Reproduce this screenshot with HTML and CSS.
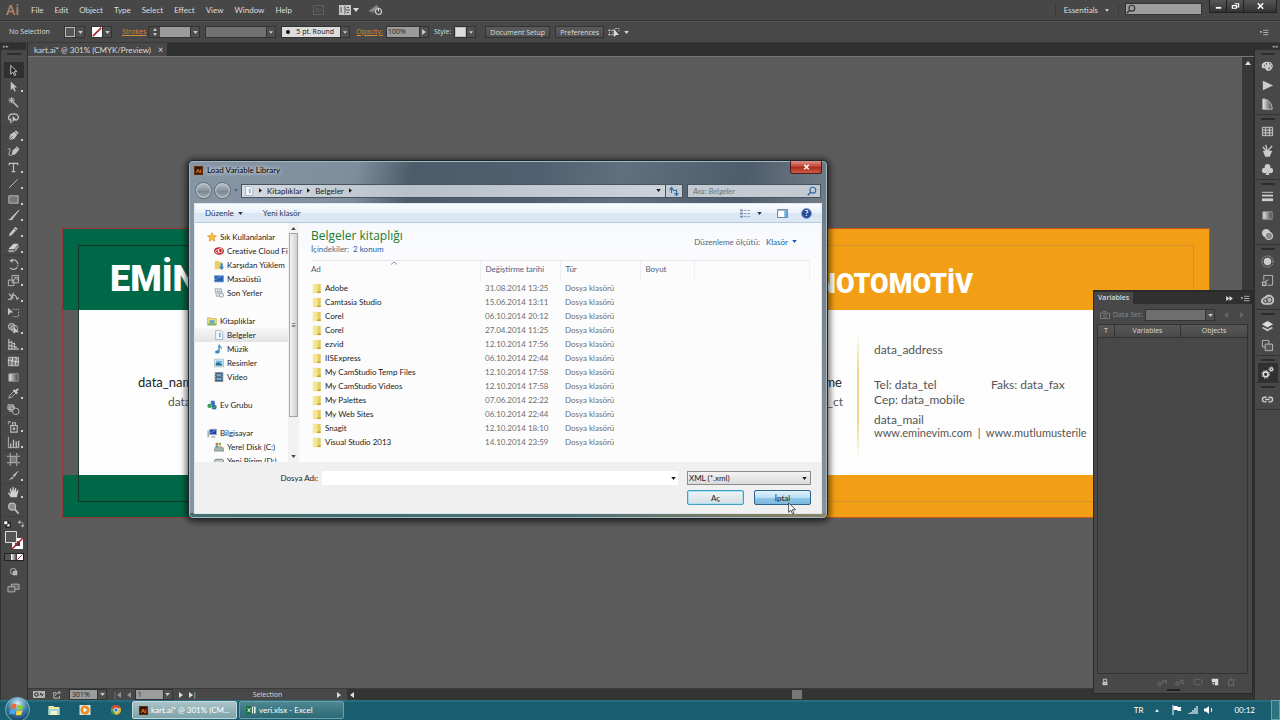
FILE: index.html
```html
<!DOCTYPE html>
<html lang="tr">
<head>
<meta charset="utf-8">
<title>kart.ai* @ 301% (CMYK/Preview)</title>
<link rel="stylesheet" href="styles.css">
</head>
<body>
<svg class="sprite" aria-hidden="true">
  <defs>
    <linearGradient id="gFold" x1="0" x2="1"><stop offset="0" stop-color="#f7eb9a"/><stop offset="1" stop-color="#dcbf4c"/></linearGradient>
    <linearGradient id="gBW" x1="0" x2="1"><stop offset="0" stop-color="#e8e8e8"/><stop offset="1" stop-color="#444"/></linearGradient>
    <radialGradient id="gOrb" cx=".5" cy=".25" r=".8"><stop offset="0" stop-color="#d6ecf5"/><stop offset=".5" stop-color="#3c83a8"/><stop offset="1" stop-color="#0c3550"/></radialGradient>
  </defs>
  <symbol id="t-select" viewBox="0 0 14 14"><path d="M4 1.5v9.5l2.300-2.200 1.700 3.700 1.500-.7-1.700-3.600h3z" fill="#222" stroke="#ccc"/></symbol>
  <symbol id="t-direct" viewBox="0 0 14 14"><path d="M4 1.500v9.500l2.300-2.200 1.700 3.700 1.500-.7-1.700-3.600h3z" fill="#c4c4c4"/></symbol>
  <symbol id="t-wand" viewBox="0 0 14 14"><path d="M5 1v7M1.500 4.500h7M2.500 2l5 5M7.500 2l-5 5" stroke="#c4c4c4" fill="none"/><path d="M6 6l6 6" stroke="#c4c4c4" stroke-width="1.500"/></symbol>
  <symbol id="t-lasso" viewBox="0 0 14 14"><path d="M4 9C0 8 1 2 7 2s7 6 2 7M4 7c-1 2 1 3 0 5" fill="none" stroke="#c4c4c4" stroke-width="1.400"/><path d="M6 4v7l2-2 3 0z" fill="#c4c4c4"/></symbol>
  <symbol id="t-pen" viewBox="0 0 14 14"><path d="M2 12l1.500-6L8 3l3 3-3 4.500z" fill="#c4c4c4"/><path d="M9 2l3 3" stroke="#c4c4c4" stroke-width="1.600"/><path d="M2 12l4-4" stroke="#474747"/></symbol>
  <symbol id="t-curve" viewBox="0 0 14 14"><path d="M5 11l1-5 3.500-3 3 3L9 10z" fill="#c4c4c4"/><path d="M1 5c2-3 3 0 2 2s-2 5 2 4" fill="none" stroke="#c4c4c4"/><path d="M10 2l3 3" stroke="#c4c4c4" stroke-width="1.500"/></symbol>
  <symbol id="t-type" viewBox="0 0 14 14"><path d="M2.500 4.500V2.500h9v2M7 2.500v9M5 11.500h4" fill="none" stroke="#c4c4c4" stroke-width="1.300"/></symbol>
  <symbol id="t-line" viewBox="0 0 14 14"><path d="M2.500 11.500l9-9" stroke="#c4c4c4"/></symbol>
  <symbol id="t-rect" viewBox="0 0 14 14"><path d="M2 3h10v8H2z" fill="#777" stroke="#bbb"/></symbol>
  <symbol id="t-brush" viewBox="0 0 14 14"><path d="M13 1L7 9 6 8z" fill="#c4c4c4" stroke="#c4c4c4"/><path d="M6 8c-2 0-1 3-5 3 3 2 6 1 6-2z" fill="#c4c4c4"/></symbol>
  <symbol id="t-pencil" viewBox="0 0 14 14"><path d="M2 12l1-3 6-7 2.500 2L5 11z" fill="#c4c4c4"/><path d="M8 4l2 2" stroke="#474747"/></symbol>
  <symbol id="t-eraser" viewBox="0 0 14 14"><path d="M1.500 8.500L7 3h5.500L8 8.500z" fill="#d0d0d0"/><path d="M1.500 9.500h6v2.500h-6zM8.300 9l4.200-5v3L8.300 12z" fill="#a0a0a0"/></symbol>
  <symbol id="t-rotate" viewBox="0 0 14 14"><path d="M5 2.500a5 5 0 1 1-2 8" fill="none" stroke="#bbb" stroke-width="1.300" stroke-dasharray="9 1 1 1"/><path d="M6 .5L2.500 3 6 5z" fill="#bbb"/></symbol>
  <symbol id="t-scale" viewBox="0 0 14 14"><path d="M1.500 6.500h6v6h-6zM5.500 1.500h7v8h-7z" fill="none" stroke="#bbb"/><path d="M6 8l4-4M7.500 3.500H11V7" stroke="#bbb" fill="none"/></symbol>
  <symbol id="t-width" viewBox="0 0 14 14"><path d="M1 10c4 2 5-7 8-4s0 6 4 2M2 4l5 5M7 3l-3 8" fill="none" stroke="#bbb" stroke-width="1.300"/></symbol>
  <symbol id="t-free" viewBox="0 0 14 14"><path d="M1 2v8l3-3h3z" fill="#c4c4c4"/><path d="M6 3.500h6.500v8H5.500" fill="none" stroke="#c4c4c4" stroke-dasharray="1.500 1.500"/></symbol>
  <symbol id="t-shape" viewBox="0 0 14 14"><circle cx="5" cy="5" r="3.500" fill="#777" stroke="#bbb"/><circle cx="8" cy="7" r="3.500" fill="none" stroke="#bbb"/><path d="M7 5v8l2-2h4z" fill="#c4c4c4"/></symbol>
  <symbol id="t-persp" viewBox="0 0 14 14"><path d="M2 1v11M5 3v9M8 5v7M2 4l7 3M2 8l9 2M1 12h12" fill="none" stroke="#bbb" stroke-width="1.300"/></symbol>
  <symbol id="t-mesh" viewBox="0 0 14 14"><path d="M1.500 2.500h11v9h-11z" fill="#777" stroke="#bbb"/><path d="M1 6c4-2 7 3 12 1M5 2c3 3-2 6 1 10M9 2c3 3-2 6 1 10" fill="none" stroke="#ddd"/></symbol>
  <symbol id="t-grad" viewBox="0 0 14 14"><path d="M2 3h10v8H2z" fill="url(#gBW)" stroke="#999"/></symbol>
  <symbol id="t-eye" viewBox="0 0 14 14"><path d="M2 12l1-3 5-5 2 2-5 5z" fill="none" stroke="#bbb"/><path d="M7 3l4 4M9 5l3-3" stroke="#ccc" stroke-width="2"/></symbol>
  <symbol id="t-blend" viewBox="0 0 14 14"><path d="M1 2h6v5H1zM3 4h5v5H3z" fill="#777" stroke="#bbb"/><circle cx="9.500" cy="9" r="3.500" fill="#474747" stroke="#bbb"/></symbol>
  <symbol id="t-spray" viewBox="0 0 14 14"><path d="M4 6h7v7H4zM6 6V3h3v3M1 2h3M1 4h1" fill="none" stroke="#bbb" stroke-width="1.200"/><circle cx="7.500" cy="9.500" r="1.500" fill="#bbb"/></symbol>
  <symbol id="t-graph" viewBox="0 0 14 14"><path d="M1.500 1v11.500H13" fill="none" stroke="#bbb"/><path d="M4 8v4M7 4v8M10 6v6M12.500 5v7" stroke="#bbb" stroke-width="1.500"/></symbol>
  <symbol id="t-artb" viewBox="0 0 14 14"><path d="M3.500 3.500h7v7h-7z" fill="#777" stroke="#bbb"/><path d="M3.500 0v3M10.500 0v3M3.500 11v3M10.500 11v3M0 3.500h3M0 10.500h3M11 3.500h3M11 10.500h3" stroke="#bbb"/></symbol>
  <symbol id="t-slice" viewBox="0 0 14 14"><path d="M13 1L8 9 6 7z" fill="#bbb"/><path d="M6 8l-4 4 5-2z" fill="#ccc"/></symbol>
  <symbol id="t-hand" viewBox="0 0 14 14"><path d="M4 12L1 7.500 2 7l2 2-1-6 1-.5 1.500 4L6 1h1.200l.3 5 1.500-4 1 .3L9.500 7l2-3 .9.600L10.500 12z" fill="#d0d0d0"/></symbol>
  <symbol id="t-zoom" viewBox="0 0 14 14"><circle cx="5.500" cy="5" r="3.700" fill="#8a8a8a" stroke="#bbb" stroke-width="1.400"/><path d="M8.500 8l4 4.500" stroke="#bbb" stroke-width="2"/></symbol>
  <symbol id="m-swap" viewBox="0 0 10 10"><path d="M3 3c4-1 5 1 4 5" fill="none" stroke="#bbb"/><path d="M4 0L1 3l3 2zM4.500 6.500h5L7 9.500z" fill="#bbb"/></symbol>
  <symbol id="m-def" viewBox="0 0 10 10"><path d="M4 4h5v5H4z" fill="#fff" stroke="#111" stroke-width="1.500"/><path d="M1 1h5v5H1z" fill="#fff" stroke="#111"/></symbol>
  <symbol id="m-draw" viewBox="0 0 14 14"><circle cx="6" cy="6" r="4" fill="none" stroke="#999" stroke-width="1.500"/><path d="M6 6h5v5H6z" fill="#aaa" stroke="#ddd"/></symbol>
  <symbol id="m-screen" viewBox="0 0 14 14"><path d="M4.500 2.500h9v6h-9z" fill="#666" stroke="#bbb"/><path d="M.5 5.500h8v6h-8z" fill="#555" stroke="#bbb"/></symbol>
  <symbol id="d-palette" viewBox="0 0 14 14"><path d="M7 2C2 2 0 5 1 8c1 2 3 0 4 2s3 2 5 1c4-2 4-9-3-9z" fill="#ccc"/><path d="M3.500 6h1M5.500 4h1M9 4h1M10.500 6.500h1M8 9h1.500" stroke="#444" stroke-width="1.600"/></symbol>
  <symbol id="d-play" viewBox="0 0 14 14"><path d="M2 2l11 5-11 5z" fill="#ccc"/></symbol>
  <symbol id="d-guide" viewBox="0 0 14 14"><path d="M2 1c6 0 10 5 10 11H2z" fill="url(#gBW)" stroke="#ccc"/></symbol>
  <symbol id="d-swatch" viewBox="0 0 14 14"><path d="M1.500 2.500h11v9h-11zM1.500 5.500h11M1.500 8.500h11M5 2.500v9M9 2.500v9" fill="#555" stroke="#ccc"/></symbol>
  <symbol id="d-brush" viewBox="0 0 14 14"><path d="M3 8h8l-2 5H5zM7 8L5 1M7 8l5-6M6 8L2 3" fill="#ccc" stroke="#ccc" stroke-width="1.400"/></symbol>
  <symbol id="d-club" viewBox="0 0 14 14"><circle cx="7" cy="4" r="3" fill="#ccc"/><circle cx="4" cy="8" r="3" fill="#ccc"/><circle cx="10" cy="8" r="3" fill="#ccc"/><path d="M7 7l2 6H5z" fill="#ccc"/></symbol>
  <symbol id="d-stroke" viewBox="0 0 14 14"><path d="M1 2.500h12" stroke="#ccc"/><path d="M1 6h12" stroke="#ccc" stroke-width="2"/><path d="M1 10.500h12" stroke="#ccc" stroke-width="3"/></symbol>
  <symbol id="d-transp" viewBox="0 0 14 14"><circle cx="5.500" cy="5.500" r="4.500" fill="#ccc"/><circle cx="8.500" cy="8.500" r="4" fill="#888" stroke="#ddd"/></symbol>
  <symbol id="d-appear" viewBox="0 0 14 14"><circle cx="7" cy="7" r="4" fill="#ccc"/><circle cx="7" cy="7" r="6" fill="none" stroke="#bbb" stroke-dasharray="1.500 1.200"/></symbol>
  <symbol id="d-gstyle" viewBox="0 0 14 14"><path d="M3 7V1.500h9.500V12H7" fill="none" stroke="#bbb"/><path d="M1.500 8.500h4v4h-4z" fill="#666" stroke="#ccc"/><path d="M5 8l3-2" stroke="#ccc"/></symbol>
  <symbol id="d-cc" viewBox="0 0 14 14"><path d="M4 12C-1 12 0 5 4 5c1-4 10-4 9.500 3 0 3-2 4-4 4z" fill="#b4b4b4" stroke="#ddd"/><circle cx="4.800" cy="8.500" r="2" fill="none" stroke="#444"/><circle cx="9" cy="7.500" r="2.800" fill="none" stroke="#444"/></symbol>
  <symbol id="d-layers" viewBox="0 0 14 14"><path d="M7 1l6 3.500L7 8 1 4.500z" fill="#ddd"/><path d="M2.500 7.500L1 8.500 7 12l6-3.500-1.500-1L7 10z" fill="#ccc"/></symbol>
  <symbol id="d-artb" viewBox="0 0 14 14"><path d="M1.500 1.500h7v7h-7z" fill="none" stroke="#bbb"/><path d="M4.500 5.500h8v7h-8z" fill="#555" stroke="#bbb"/></symbol>
  <symbol id="d-gears" viewBox="0 0 14 14"><circle cx="5" cy="9" r="2.600" fill="none" stroke="#ddd" stroke-width="1.800"/><circle cx="5" cy="9" r="4.200" fill="none" stroke="#ddd" stroke-dasharray="1.500 1.800"/><circle cx="11" cy="3.500" r="1.400" fill="none" stroke="#ddd" stroke-width="1.300"/><circle cx="11" cy="3.500" r="2.500" fill="none" stroke="#ddd" stroke-dasharray="1 1"/></symbol>
  <symbol id="d-link" viewBox="0 0 14 14"><path d="M6 9.500H4a2.500 2.500 0 0 1 0-5h2M8 4.500h2a2.500 2.500 0 0 1 0 5H8M4.500 7h5" fill="none" stroke="#ccc" stroke-width="1.500"/></symbol>
  <symbol id="down" viewBox="0 0 6 4"><path d="M0 0h6L3 4z" fill="currentColor"/></symbol>
  <symbol id="right" viewBox="0 0 4 6"><path d="M0 0v6l4-3z" fill="currentColor"/></symbol>
  <symbol id="left" viewBox="0 0 4 6"><path d="M4 0v6L0 3z" fill="currentColor"/></symbol>
  <symbol id="up" viewBox="0 0 6 4"><path d="M0 4h6L3 0z" fill="currentColor"/></symbol>
  <symbol id="menu" viewBox="0 0 10 8"><path d="M0 2.500h3L1.500 5z" fill="#bbb"/><path d="M4 1.500h6M4 4h6M4 6.500h6" stroke="#bbb"/></symbol>
  <symbol id="slash" viewBox="0 0 12 12"><path d="M0 0h12v12H0z" fill="#fff"/><path d="M1 11L11 1" stroke="#b3202c" stroke-width="2"/></symbol>
  <symbol id="star" viewBox="0 0 12 12"><path d="M6 .8l1.600 3.500 3.800.4-2.900 2.500.9 3.800L6 9.100 2.600 11l.9-3.800L.6 4.700l3.800-.4z" fill="#f7bd3c" stroke="#d08a1c" stroke-width=".7"/></symbol>
  <symbol id="ccred" viewBox="0 0 12 12"><ellipse cx="6" cy="6" rx="6" ry="4.500" fill="#c8202c"/><circle cx="4" cy="6.500" r="2" fill="none" stroke="#fff"/><circle cx="7.500" cy="5.500" r="2.500" fill="none" stroke="#fff"/></symbol>
  <symbol id="dl" viewBox="0 0 12 12"><path d="M1 1h4l1 1h3v9H1z" fill="#ecd067"/><path d="M8 4v4H6l3.500 4L12 8h-1.500V4z" fill="#2f83c8"/></symbol>
  <symbol id="desk" viewBox="0 0 12 12"><path d="M.5 2h11v7.500H.5z" fill="#2a62b2" stroke="#7ba0cc"/><path d="M1 7c3-1 4-4 8-4" stroke="#66a9e8" fill="none"/></symbol>
  <symbol id="recent" viewBox="0 0 12 12"><path d="M1 1h8l1 9H3z" fill="#dfe5e8" stroke="#97a5ad"/><path d="M3 4h5M3 6h5" stroke="#8aa"/><circle cx="9" cy="8.500" r="2.500" fill="#e9eef0" stroke="#8a9aa3"/></symbol>
  <symbol id="lib" viewBox="0 0 12 12"><path d="M.5 2h4l1 1h6v8H.5z" fill="#efd978" stroke="#b9a24b" stroke-width=".6"/><path d="M3 5h6v4H3z" fill="#5faac8"/><path d="M1 9h10v2H1z" fill="#77b36a"/></symbol>
  <symbol id="doc" viewBox="0 0 12 12"><path d="M2 .5h6l2.500 2.500v8.500H2z" fill="#f8fbfd" stroke="#9aa9b5"/><path d="M6 4h2M5.500 6h3M6 8h2" stroke="#3a76b4"/></symbol>
  <symbol id="music" viewBox="0 0 12 12"><path d="M6 1v8" stroke="#2878bd" stroke-width="1.500"/><path d="M6 0c1 3 5 3 3 7 0-2-2-3-3-3z" fill="#3fa0dd"/><ellipse cx="4" cy="9.500" rx="2.800" ry="2" fill="#2f8bcb"/></symbol>
  <symbol id="pic" viewBox="0 0 12 12"><path d="M.5 1.500h11v9H.5z" fill="#fff" stroke="#9fb2bf"/><path d="M2 3h8v6H2z" fill="#6cbbe4"/><path d="M2 7l3-2 5 3v1H2z" fill="#256a86"/></symbol>
  <symbol id="video" viewBox="0 0 12 12"><path d="M1 .5h10v11H1z" fill="#33465a"/><path d="M3 2h6v3.500H3zM3 6.500h6V10H3z" fill="#74a6cb"/><path d="M2 1v10M10 1v10" stroke="#dfe8ee" stroke-dasharray="1 1"/></symbol>
  <symbol id="home" viewBox="0 0 12 12"><circle cx="7" cy="3.500" r="2.800" fill="#3777c4"/><circle cx="3" cy="7" r="2.600" fill="#3aa04b"/><circle cx="8.500" cy="8.500" r="3" fill="#2b61ad"/><path d="M6 8l2 2 3-4" stroke="#77d169" fill="none"/></symbol>
  <symbol id="pc" viewBox="0 0 12 12"><path d="M3 1.500h8.500v6.500H3z" fill="#2142a8" stroke="#a9b4be"/><path d="M5 10h5v1.500H5zM.5 3h2v8h-2z" fill="#a1acb5"/><path d="M4 6l6-3" stroke="#769be4"/></symbol>
  <symbol id="drive" viewBox="0 0 12 12"><path d="M0 8l2-2h8l2 2v3H0z" fill="#a9b2b8" stroke="#707b83" stroke-width=".6"/><path d="M2 1h3v2.500H2z" fill="#e36a3a"/><path d="M5.500 1h3v2.500h-3z" fill="#7cb94b"/><path d="M2 4h3v2H2z" fill="#3d8dd0"/><path d="M5.500 4h3v2h-3z" fill="#efc43d"/><path d="M9 9.500h2" stroke="#56d04c"/></symbol>
  <symbol id="drive2" viewBox="0 0 12 12"><path d="M0 6l2-2h8l2 2v3H0z" fill="#c9ced2" stroke="#626b72"/><path d="M9 7.500h2" stroke="#56d04c"/></symbol>
  <symbol id="folder" viewBox="0 0 12 12"><path d="M2 1l4-.5V11l-4 .5z" fill="#f6e88f"/><path d="M5 1h5.500v10H5z" fill="url(#gFold)"/><path d="M8 9h2.500v2H6z" fill="#c3a337"/></symbol>
  <symbol id="refresh" viewBox="0 0 12 12"><path d="M3.500 8V3M1.500 5l2-2.500 2 2.500M8.500 4.500v5.500M6.500 8l2 2.500L10.500 8M5 5.500h3.500" fill="none" stroke="#2f6da8" stroke-width="1.200"/></symbol>
  <symbol id="mag" viewBox="0 0 12 12"><circle cx="7" cy="5" r="3.500" fill="none" stroke="currentColor" stroke-width="1.400"/><path d="M4.500 7.500L1 11" stroke="currentColor" stroke-width="1.800"/></symbol>
  <symbol id="view" viewBox="0 0 12 10"><path d="M0 1.500h3M0 5h3M0 8.500h3" stroke="#6c8ba8" stroke-width="2"/><path d="M4 1.500h3M4 5h3M4 8.500h3M8 1.500h3M8 5h3M8 8.500h3" stroke="#8a98a6"/></symbol>
  <symbol id="pane" viewBox="0 0 12 10"><path d="M.5.500h11v9H.5z" fill="#fff" stroke="#5a7690"/><path d="M8 1.500h3v7.500H8z" fill="#66b2dc"/><path d="M1 1.500h10" stroke="#86a4bd"/></symbol>
  <symbol id="cloud-off" viewBox="0 0 14 12"><path d="M0 7L8 1l1 3-5 4zM3 9l4-3" fill="#8d8d8d" stroke="#777"/><circle cx="9.500" cy="7.500" r="3" fill="#474747" stroke="#ccc" stroke-width="1.200"/><path d="M9.500 3.500v4" stroke="#ddd"/></symbol>
  <symbol id="arrange" viewBox="0 0 12 10"><path d="M0 0h12v10H0z" fill="#c8c8c8"/><path d="M6 1v8M7 5h4M2 2v6M8 2.500h2M8 7.500h2" stroke="#555"/></symbol>
  <symbol id="isolate" viewBox="0 0 12 10"><path d="M0 3.500h6M0 7.500h6M1.500 2v7M5 2v7M7 1.500h4v3" stroke="#aaa" fill="none" stroke-dasharray="2 .6"/><path d="M6 2v8l2-2 3 0z" fill="#ddd"/></symbol>
</svg>

<header class="menubar">
  <span class="ai-logo">Ai</span>
  <nav class="menus">
    <button>File</button><button>Edit</button><button>Object</button><button>Type</button><button>Select</button><button>Effect</button><button>View</button><button>Window</button><button>Help</button>
  </nav>
  <span class="bridge">Br</span>
  <button class="arrange" aria-label="Arrange documents"><svg class="i12x10"><use href="#arrange"/></svg><svg class="i6x4"><use href="#down"/></svg></button>
  <svg class="i14"><use href="#cloud-off"/></svg>
  <span class="grow"></span>
  <button class="workspace">Essentials <svg class="i4x3"><use href="#down"/></svg></button>
  <label class="help-search"><svg class="i10"><use href="#mag"/></svg><input type="text" aria-label="Search help"></label>
  <div class="winbtns">
    <button aria-label="Minimize"><svg viewBox="0 0 10 8"><path d="M2 6h6" stroke="#fff" stroke-width="2"/></svg></button>
    <button aria-label="Restore"><svg viewBox="0 0 10 8"><path d="M4 1.500h4.500V5H7M1.500 3.500H6v3H1.500z" fill="none" stroke="#fff" stroke-width="1.300"/></svg></button>
    <button class="wclose" aria-label="Close"><svg viewBox="0 0 10 8"><path d="M2 1l6 6M8 1L2 7" stroke="#fff" stroke-width="1.700"/></svg></button>
  </div>
</header>

<section class="control">
  <span class="nosel">No Selection</span>
  <div class="combo"><span class="swatch gray"></span><button aria-label="Fill"><svg class="i5x4"><use href="#down"/></svg></button></div>
  <div class="combo second"><svg class="sw"><use href="#slash"/></svg><button aria-label="Stroke"><svg class="i5x4"><use href="#down"/></svg></button></div>
  <a class="olink stroke-l" href="#">Strokes</a>
  <div class="combo stroke-w"><span class="spin"><svg class="i4x3"><use href="#up"/></svg><svg class="i4x3"><use href="#down"/></svg></span><input type="text" aria-label="Stroke weight"><button aria-label="Weights"><svg class="i5x4"><use href="#down"/></svg></button></div>
  <div class="combo profile"><span class="fill"></span><button aria-label="Profile"><svg class="i4x3"><use href="#down"/></svg></button></div>
  <div class="combo brush"><span class="fill"><i></i>5 pt. Round</span><button aria-label="Brush"><svg class="i4x3"><use href="#down"/></svg></button></div>
  <a class="olink opac-l" href="#">Opacity:</a>
  <div class="combo opacity"><input type="text" value="100%" aria-label="Opacity"><button aria-label="Opacity values"><svg class="i4x6"><use href="#right"/></svg></button></div>
  <span class="style-l">Style:</span>
  <div class="combo"><span class="swatch white"></span><button aria-label="Style"><svg class="i4x3"><use href="#down"/></svg></button></div>
  <button class="cbtn first">Document Setup</button>
  <button class="cbtn">Preferences</button>
  <svg class="i12x10 iso"><use href="#isolate"/></svg><svg class="i5x4 isod"><use href="#down"/></svg>
  <span class="grow"></span>
  <svg class="i10x8"><use href="#menu"/></svg>
</section>

<main class="work">
  <aside class="tools">
    <div class="strip">▸▸</div>
    <span class="grip"></span>
    <div class="tgroup">
      <button class="on" aria-label="Selection"><svg><use href="#t-select"/></svg></button>
      <button class="m" aria-label="Direct Selection"><svg><use href="#t-direct"/></svg></button>
      <button aria-label="Magic Wand"><svg><use href="#t-wand"/></svg></button>
      <button aria-label="Lasso"><svg><use href="#t-lasso"/></svg></button>
    </div>
    <div class="tgroup">
      <button class="m" aria-label="Pen"><svg><use href="#t-pen"/></svg></button>
      <button aria-label="Curvature"><svg><use href="#t-curve"/></svg></button>
      <button class="m" aria-label="Type"><svg><use href="#t-type"/></svg></button>
      <button class="m" aria-label="Line"><svg><use href="#t-line"/></svg></button>
      <button class="m" aria-label="Rectangle"><svg><use href="#t-rect"/></svg></button>
      <button class="m" aria-label="Paintbrush"><svg><use href="#t-brush"/></svg></button>
      <button class="m" aria-label="Pencil"><svg><use href="#t-pencil"/></svg></button>
      <button class="m" aria-label="Eraser"><svg><use href="#t-eraser"/></svg></button>
    </div>
    <div class="tgroup">
      <button class="m" aria-label="Rotate"><svg><use href="#t-rotate"/></svg></button>
      <button class="m" aria-label="Scale"><svg><use href="#t-scale"/></svg></button>
      <button class="m" aria-label="Width"><svg><use href="#t-width"/></svg></button>
      <button aria-label="Free Transform"><svg><use href="#t-free"/></svg></button>
      <button class="m" aria-label="Shape Builder"><svg><use href="#t-shape"/></svg></button>
      <button class="m" aria-label="Perspective"><svg><use href="#t-persp"/></svg></button>
    </div>
    <div class="tgroup">
      <button aria-label="Mesh"><svg><use href="#t-mesh"/></svg></button>
      <button aria-label="Gradient"><svg><use href="#t-grad"/></svg></button>
      <button class="m" aria-label="Eyedropper"><svg><use href="#t-eye"/></svg></button>
      <button aria-label="Blend"><svg><use href="#t-blend"/></svg></button>
    </div>
    <div class="tgroup">
      <button class="m" aria-label="Symbol Sprayer"><svg><use href="#t-spray"/></svg></button>
      <button class="m" aria-label="Graph"><svg><use href="#t-graph"/></svg></button>
    </div>
    <div class="tgroup">
      <button aria-label="Artboard"><svg><use href="#t-artb"/></svg></button>
      <button class="m" aria-label="Slice"><svg><use href="#t-slice"/></svg></button>
    </div>
    <div class="tgroup">
      <button class="m" aria-label="Hand"><svg><use href="#t-hand"/></svg></button>
      <button aria-label="Zoom"><svg><use href="#t-zoom"/></svg></button>
    </div>
    <div class="mini"><svg class="i8"><use href="#m-def"/></svg><svg class="i8"><use href="#m-swap"/></svg></div>
    <svg class="fillstroke" viewBox="0 0 20 20"><path d="M8 8h11v11H8z" fill="#fff"/><path d="M11 11h5v5h-5z" fill="#444"/><path d="M8 19L19 8" stroke="#b3202c" stroke-width="1.600"/><path d="M1.500 1.500h11v11h-11z" fill="#555" stroke="#ddd"/></svg>
    <div class="modes"><i class="c1"></i><i class="c2"></i><svg><use href="#slash"/></svg></div>
    <svg class="draw"><use href="#m-draw"/></svg>
    <svg class="screen"><use href="#m-screen"/></svg>
  </aside>

  <section class="center">
    <div class="tabs"><div class="tab">kart.ai* @ 301% (CMYK/Preview)<button aria-label="Close tab">×</button></div></div>
    <div class="canvas-row">
      <div class="canvas">
        <div class="card green">
          <div class="band top"></div><div class="paper"></div><div class="band bottom"></div><div class="trim"></div>
          <div class="headline">EMİNEVİM</div>
          <p class="name">data_name</p><p class="title">data_ct</p>
        </div>
        <div class="card orange">
          <div class="band top"></div><div class="paper"></div><div class="band bottom"></div><div class="trim"></div>
          <div class="headline">EVİNOTOMOTİV</div>
          <p class="name">data_name</p><p class="title">data_ct</p>
          <span class="rule"></span>
          <div class="contact">
            <p class="addr">data_address</p>
            <p class="two"><span>Tel: data_tel</span><span>Faks: data_fax</span></p>
            <p class="cep">Cep: data_mobile</p>
            <p class="mail">data_mail</p>
            <p class="web">www.eminevim.com &nbsp;| &nbsp;www.mutlumusterile</p>
          </div>
        </div>
      </div>
      <div class="vscroll"><svg class="i6x4"><use href="#up"/></svg></div>
    </div>
    <footer class="status">
      <svg class="st1" viewBox="0 0 14 8"><path d="M0 0h14v8H0z" fill="#bbb"/><circle cx="4" cy="4" r="2" fill="none" stroke="#333" stroke-width="1.300"/><path d="M8 2l4 4M8 5l2-3M10 6l2-3" stroke="#333"/></svg>
      <svg class="i8" viewBox="0 0 10 10"><path d="M4 2H1v7h7V6M3 6c0-3 3-4 6-4M7 0l2 2-2 2" fill="none" stroke="#bbb" stroke-width="1.200"/></svg>
      <div class="combo zoomc"><input type="text" value="301%" aria-label="Zoom"><button aria-label="Zoom levels"><svg class="i5x4"><use href="#down"/></svg></button></div>
      <span class="pg dim">|<svg class="i4x6"><use href="#left"/></svg></span><span class="pg dim"><svg class="i4x6"><use href="#left"/></svg></span>
      <div class="combo pagec"><input type="text" value="1" aria-label="Artboard"><button aria-label="Artboards"><svg class="i5x4"><use href="#down"/></svg></button></div>
      <span class="pg"><svg class="i4x6"><use href="#right"/></svg></span><span class="pg"><svg class="i4x6"><use href="#right"/></svg>|</span>
      <span class="toolname">Selection</span>
      <svg class="i4x6"><use href="#right"/></svg>
      <div class="hscroll"><svg class="i4x6"><use href="#left"/></svg><i></i></div>
    </footer>
  </section>

  <aside class="dock">
    <div class="strip">◂◂</div>
    <div class="dgroup"><button aria-label="Color"><svg><use href="#d-palette"/></svg></button><button aria-label="Actions"><svg><use href="#d-play"/></svg></button><button aria-label="Color Guide"><svg><use href="#d-guide"/></svg></button></div>
    <div class="dgroup"><button aria-label="Swatches"><svg><use href="#d-swatch"/></svg></button><button aria-label="Brushes"><svg><use href="#d-brush"/></svg></button><button aria-label="Symbols"><svg><use href="#d-club"/></svg></button></div>
    <div class="dgroup"><button aria-label="Stroke"><svg><use href="#d-stroke"/></svg></button><button aria-label="Gradient"><svg><use href="#t-grad"/></svg></button><button aria-label="Transparency"><svg><use href="#d-transp"/></svg></button></div>
    <div class="dgroup"><button aria-label="Appearance"><svg><use href="#d-appear"/></svg></button><button aria-label="Graphic Styles"><svg><use href="#d-gstyle"/></svg></button><button aria-label="Creative Cloud"><svg><use href="#d-cc"/></svg></button></div>
    <div class="dgroup"><button aria-label="Layers"><svg><use href="#d-layers"/></svg></button><button aria-label="Artboards"><svg><use href="#d-artb"/></svg></button></div>
    <div class="dgroup"><button class="on" aria-label="Variables"><svg><use href="#d-gears"/></svg></button></div>
    <div class="dgroup"><button aria-label="Links"><svg><use href="#d-link"/></svg></button></div>
  </aside>
</main>

<section class="varpanel">
  <header><h2>Variables</h2><span class="grow"></span><svg class="ff" viewBox="0 0 8 6"><path d="M0 0l4 3-4 3zM4 0l4 3-4 3z" fill="#ddd"/></svg><svg class="i10x8"><use href="#menu"/></svg></header>
  <div class="dataset">
    <svg class="cam" viewBox="0 0 10 8"><path d="M.5 2h9v5.500h-9zM3 .500h3" fill="none" stroke="#777"/><circle cx="5" cy="4.700" r="1.500" fill="none" stroke="#777"/></svg>
    <label for="ds">Data Set:</label>
    <div class="combo dsc"><input id="ds" type="text"><button aria-label="Data sets"><svg class="i5x4"><use href="#down"/></svg></button></div>
    <svg class="i4x6"><use href="#left"/></svg><svg class="i4x6"><use href="#right"/></svg>
  </div>
  <div class="vtable"><div class="vhead"><span>T</span><span>Variables</span><span>Objects</span></div></div>
  <div class="vfoot">
    <svg class="i8" viewBox="0 0 10 10"><path d="M2 4.500h6V9H2z" fill="#ccc"/><path d="M3 4V1.500h4V4" fill="none" stroke="#ccc" stroke-width="1.200"/><path d="M4.500 6.500h1" stroke="#333"/></svg>
    <span class="grow"></span>
    <svg class="i10 dim" viewBox="0 0 12 10"><circle cx="3" cy="7" r="2" fill="none" stroke="#aaa"/><path d="M7 7V3l2 2 2-2v4" fill="none" stroke="#aaa"/></svg>
    <svg class="i10 dim" viewBox="0 0 12 10"><circle cx="3" cy="7" r="2" fill="none" stroke="#aaa"/><circle cx="8" cy="4" r="1.500" fill="none" stroke="#aaa"/><path d="M8 7h3" stroke="#aaa"/></svg>
    <svg class="i10 dim" viewBox="0 0 12 10"><ellipse cx="6" cy="5" rx="5" ry="3.500" fill="none" stroke="#aaa" stroke-dasharray="3 1"/></svg>
    <svg class="i8" viewBox="0 0 10 10"><path d="M1 1h8v8H5V5H1z" fill="#ddd"/><path d="M1 6h3v3z" fill="#ddd"/></svg>
    <svg class="i8 dim" viewBox="0 0 10 10"><path d="M1 2.500h8M2 4v5h6V4M4 1h2" fill="none" stroke="#aaa"/></svg>
  </div>
  <span class="vgrip"></span>
</section>

<section class="dialog" role="dialog" aria-label="Load Variable Library">
  <header class="dtitle"><span class="aibox">Ai</span><h1>Load Variable Library</h1><button aria-label="Kapat"><svg viewBox="0 0 10 8"><path d="M2.500 1.500l5 5M7.500 1.500l-5 5" stroke="#fff" stroke-width="1.700"/></svg></button></header>
  <div class="dnav">
    <button class="round" aria-label="Geri"></button><button class="round" aria-label="İleri"></button><svg class="i4x3 hist"><use href="#down"/></svg>
    <div class="crumbs"><svg class="i10"><use href="#doc"/></svg><svg class="i3x5"><use href="#right"/></svg><a href="#">Kitaplıklar</a><svg class="i3x5"><use href="#right"/></svg><a href="#">Belgeler</a><svg class="i3x5"><use href="#right"/></svg><span class="grow"></span><svg class="i5x4"><use href="#down"/></svg></div>
    <button class="refresh" aria-label="Yenile"><svg class="i12"><use href="#refresh"/></svg></button>
    <label class="dsearch"><input type="text" placeholder="Ara: Belgeler" aria-label="Ara"><svg class="i10"><use href="#mag"/></svg></label>
  </div>
  <div class="dclient">
    <div class="dtool">
      <button>Düzenle <svg class="i5x4"><use href="#down"/></svg></button><button>Yeni klasör</button><span class="grow"></span>
      <svg class="vw"><use href="#view"/></svg><svg class="i5x4 vd"><use href="#down"/></svg><svg class="pn"><use href="#pane"/></svg><span class="q">?</span>
    </div>
    <div class="dbody">
      <div class="tree">
        <a class="root" href="#"><svg><use href="#star"/></svg>Sık Kullanılanlar</a>
        <a href="#"><svg><use href="#ccred"/></svg>Creative Cloud Fi</a>
        <a href="#"><svg><use href="#dl"/></svg>Karşıdan Yüklem</a>
        <a href="#"><svg><use href="#desk"/></svg>Masaüstü</a>
        <a class="last" href="#"><svg><use href="#recent"/></svg>Son Yerler</a>
        <a class="root" href="#"><svg><use href="#lib"/></svg>Kitaplıklar</a>
        <a class="sel" href="#"><svg><use href="#doc"/></svg>Belgeler</a>
        <a href="#"><svg><use href="#music"/></svg>Müzik</a>
        <a href="#"><svg><use href="#pic"/></svg>Resimler</a>
        <a class="last" href="#"><svg><use href="#video"/></svg>Video</a>
        <a class="root last" href="#"><svg><use href="#home"/></svg>Ev Grubu</a>
        <a class="root" href="#"><svg><use href="#pc"/></svg>Bilgisayar</a>
        <a href="#"><svg><use href="#drive"/></svg>Yerel Disk (C:)</a>
        <a href="#"><svg><use href="#drive2"/></svg>Yeni Birim (D:)</a>
      </div>
      <div class="tscroll"><svg class="i5x4"><use href="#up"/></svg><i>≡</i><svg class="i5x4"><use href="#down"/></svg></div>
      <div class="files">
        <div class="lhead"><div><h2>Belgeler kitaplığı</h2><p>İçindekiler: <a href="#">2 konum</a></p></div><p class="sort">Düzenleme ölçütü: <a href="#">Klasör <svg class="i5x4"><use href="#down"/></svg></a></p></div>
        <table>
          <colgroup><col class="c-name"><col class="c-date"><col class="c-type"><col class="c-size"><col></colgroup>
          <thead><tr><th>Ad<svg class="srt" viewBox="0 0 6 4"><path d="M0 3.500L3 1l3 2.500" fill="none" stroke="#8a9aa8"/></svg></th><th>Değiştirme tarihi</th><th>Tür</th><th>Boyut</th><th></th></tr></thead>
          <tbody>
            <tr><td><svg><use href="#folder"/></svg>Adobe</td><td>31.08.2014 13:25</td><td>Dosya klasörü</td><td></td><td></td></tr>
            <tr><td><svg><use href="#folder"/></svg>Camtasia Studio</td><td>15.06.2014 13:11</td><td>Dosya klasörü</td><td></td><td></td></tr>
            <tr><td><svg><use href="#folder"/></svg>Corel</td><td>06.10.2014 20:12</td><td>Dosya klasörü</td><td></td><td></td></tr>
            <tr><td><svg><use href="#folder"/></svg>Corel</td><td>27.04.2014 11:25</td><td>Dosya klasörü</td><td></td><td></td></tr>
            <tr><td><svg><use href="#folder"/></svg>ezvid</td><td>12.10.2014 17:56</td><td>Dosya klasörü</td><td></td><td></td></tr>
            <tr><td><svg><use href="#folder"/></svg>IISExpress</td><td>06.10.2014 22:44</td><td>Dosya klasörü</td><td></td><td></td></tr>
            <tr><td><svg><use href="#folder"/></svg>My CamStudio Temp Files</td><td>12.10.2014 17:58</td><td>Dosya klasörü</td><td></td><td></td></tr>
            <tr><td><svg><use href="#folder"/></svg>My CamStudio Videos</td><td>12.10.2014 17:58</td><td>Dosya klasörü</td><td></td><td></td></tr>
            <tr><td><svg><use href="#folder"/></svg>My Palettes</td><td>07.06.2014 22:22</td><td>Dosya klasörü</td><td></td><td></td></tr>
            <tr><td><svg><use href="#folder"/></svg>My Web Sites</td><td>06.10.2014 22:44</td><td>Dosya klasörü</td><td></td><td></td></tr>
            <tr><td><svg><use href="#folder"/></svg>Snagit</td><td>12.10.2014 18:10</td><td>Dosya klasörü</td><td></td><td></td></tr>
            <tr><td><svg><use href="#folder"/></svg>Visual Studio 2013</td><td>14.10.2014 23:59</td><td>Dosya klasörü</td><td></td><td></td></tr>
          </tbody>
        </table>
      </div>
    </div>
    <div class="dfoot">
      <label for="fn">Dosya Adı:</label>
      <div class="fname"><input id="fn" type="text"><svg class="i5x4"><use href="#down"/></svg></div>
      <div class="ftype"><select aria-label="Dosya türü"><option>XML (*.xml)</option></select><svg class="i5x4"><use href="#down"/></svg></div>
      <div class="dbtns"><button class="open">Aç</button><button class="cancel">İptal</button></div>
    </div>
  </div>
</section>

<footer class="taskbar">
  <svg class="orb" viewBox="0 0 24 24"><circle cx="12" cy="12" r="11.500" fill="url(#gOrb)" stroke="#8fc0d2" stroke-width=".8"/><path d="M6 7.500c2-1.300 3.500-1.300 5.200-.4l-.8 4.400c-1.700-.9-3.400-.8-5.200.3z" fill="#ef6a34"/><path d="M12 7.500c2 1 3.700.8 5.800-.4l-.9 4.400c-1.900 1-3.600 1.100-5.500.3z" fill="#8ccb45"/><path d="M5 12.600c1.800-1 3.500-1 5.200-.2l-.8 4.300c-1.600-.8-3.200-.8-5.100.3z" fill="#49a9e8"/><path d="M11.200 12.800c1.900.8 3.700.7 5.600-.3l-.9 4.300c-1.900 1-3.600 1.100-5.500.3z" fill="#fbd03c"/></svg>
  <svg class="launch" viewBox="0 0 12 12"><path d="M.5 2h5l1 1h5v8H.5z" fill="#f3e7a3"/><path d="M.5 5h11v5H.5z" fill="#a5d5d9"/><path d="M3 7h6v3.500H3z" fill="#eef6d0"/></svg>
  <svg class="launch" viewBox="0 0 12 12"><path d="M.5 1h11v10H.5z" fill="#dbe6ea"/><circle cx="6" cy="6" r="4.500" fill="#f08c1b"/><path d="M4.500 3.500v5l4-2.500z" fill="#fff"/></svg>
  <svg class="launch" viewBox="0 0 12 12"><circle cx="6" cy="6" r="5" fill="#e0b929"/><path d="M1.700 3.500A5 5 0 0 1 10.500 4H6L4 7z" fill="#d83a2c"/><path d="M1.500 4l3 4.500L6 11A5 5 0 0 1 1.500 4z" fill="#3a9c4a"/><circle cx="6" cy="6" r="2.200" fill="#3b78d8" stroke="#fff" stroke-width=".8"/></svg>
  <button class="task active"><span class="aibox">Ai</span>kart.ai* @ 301% (CM...</button>
  <button class="task"><svg class="i10" viewBox="0 0 12 12"><path d="M0 1h7v10H0z" fill="#1e7145"/><path d="M2 4l3 4.500M5 4L2 8.500" stroke="#fff"/><path d="M7 2h4.500v8H7z" fill="#e8f2ec"/><path d="M9 2v8" stroke="#1e7145"/></svg>veri.xlsx - Excel</button>
  <span class="grow"></span>
  <span class="lang">TR</span>
  <svg class="i4x3 tup"><use href="#up"/></svg>
  <svg class="i10" viewBox="0 0 10 10"><path d="M1 0v10" stroke="#fff"/><path d="M1.500 1h4v1h4l-1 2 1 2h-4V5h-4z" fill="#fff"/></svg>
  <svg class="i10" viewBox="0 0 10 10"><path d="M1 9V8M3 9V7M5 9V5M7 9V3M9 9V1" stroke="#dce9ec" stroke-width="1.300"/></svg>
  <svg class="i10" viewBox="0 0 10 10"><path d="M0 3.500h2L5 1v8L2 6.500H0z" fill="#fff"/><path d="M7 3c1 1 1 3 0 4" fill="none" stroke="#fff"/></svg>
  <time>00:12</time>
  <span class="showdesk"></span>
</footer>

<svg class="cursor" viewBox="0 0 10 14"><path d="M.7.8v10.500l2.600-2.400 1.600 4 1.700-.7-1.700-3.900h3.500z" fill="#fff" stroke="#333" stroke-width=".9"/></svg>
</body>
</html>
```
FILE: styles.css
```css
* { box-sizing: border-box; }
html, body { height: 100%; }
body {
  margin: 0;
  display: flex;
  flex-direction: column;
  overflow: hidden;
  background: #474747;
  color: #ddd;
  font-family: "Open Sans", "Noto Sans", sans-serif;
  font-size: 8px;
  line-height: 12px;
}
button, input, select { font: inherit; color: inherit; margin: 0; padding: 0; border: 0; background: none; border-radius: 0; }
input { min-width: 0; }
h1, h2, p { margin: 0; font-size: inherit; font-weight: normal; }
a { color: inherit; text-decoration: none; }
svg { display: block; flex: none; }
.sprite { position: absolute; width: 0; height: 0; }
.grow { flex: 1; }
.i14 { width: 14px; height: 12px; }
.i12 { width: 12px; height: 12px; }
.i10 { width: 10px; height: 10px; }
.i8 { width: 8px; height: 8px; }
.i12x10 { width: 12px; height: 10px; }
.i10x8 { width: 10px; height: 7px; }
.i6x4 { width: 6px; height: 4px; }
.i5x4 { width: 5px; height: 3px; }
.i4x3 { width: 4px; height: 3px; }
.i4x6 { width: 4px; height: 6px; }
.i3x5 { width: 3px; height: 5px; }
.dim { opacity: .5; }

/* menu bar */
.menubar { height: 21px; display: flex; align-items: center; background: #484747; border-bottom: 1px solid #363636; flex: none; }
.ai-logo { width: 31px; padding-left: 6px; font-size: 14px; line-height: 18px; font-weight: 600; color: #b08468; }
.menus { display: flex; gap: 11px; font-family: Lato, sans-serif; }
.bridge { margin-left: 21px; width: 11px; height: 10px; border: 1px solid #606060; color: #606060; font-size: 6px; line-height: 8px; text-align: center; }
.arrange { display: flex; align-items: center; gap: 2px; margin: 0 10px 0 15px; }
.workspace { display: flex; align-items: center; gap: 7px; padding: 0 9px 0 8px; height: 14px; border-left: 1px solid #3b3b3b; border-right: 1px solid #3b3b3b; font-family: Lato, sans-serif; }
.help-search { display: flex; align-items: center; margin: 0 7px 2px 6px; width: 77px; height: 12px; background: #9d9d9d; border: 1px solid #333; color: #333; }
.help-search input { flex: 1; }
.winbtns { display: flex; align-self: flex-start; width: 68px; height: 13px; margin-right: 3px; border: 1px solid #222; border-top: 0; }
.winbtns button { flex: 1; display: flex; justify-content: center; align-items: center; background: linear-gradient(#555, #333); border-right: 1px solid #222; }
.winbtns .wclose { flex: 2; border: 0; }
.winbtns svg { width: 9px; height: 8px; }

/* control bar */
.control { height: 22px; display: flex; align-items: center; flex: none; font-size: 7px; background: #484848; border-top: 1px solid #545454; border-bottom: 1px solid #383838; padding-right: 11px; }
.nosel { width: 64px; padding-left: 9px; white-space: nowrap; }
.combo { display: flex; height: 12px; border: 1px solid #333; }
.combo button { width: 9px; display: flex; align-items: center; justify-content: center; background: #505050; border-left: 1px solid #333; color: #ccc; }
.combo input { background: #9c9c9c; color: #222; width: 30px; }
.combo.opacity input { width: 32px; padding-left: 1px; }
.swatch { width: 10px; border: 1px solid #bbb; background: #555; }
.swatch.white { width: 11px; background: #ddd; }
.second { margin-left: 6px; }
.sw { width: 10px; height: 10px; }
.olink { color: #d78a3c; text-decoration: underline; }
.stroke-l { margin: 0 2px 0 10px; }
.spin { width: 11px; display: flex; flex-direction: column; justify-content: space-around; align-items: center; }
.combo .fill { flex: 1; background: #707070; white-space: nowrap; }
.profile { width: 71px; margin-left: 5px; }
.brush { width: 69px; margin-left: 5px; }
.combo.brush .fill { background: #ddd; color: #111; line-height: 10px; display: flex; align-items: center; gap: 6px; padding-left: 4px; }
.fill i { width: 4px; height: 4px; border-radius: 50%; background: #111; }
.opac-l { margin: 0 3px 0 6px; }
.style-l { margin: 0 3px 0 5px; }
.cbtn { height: 12px; line-height: 9px; padding: 0 4px; background: linear-gradient(#5c5c5c, #4d4d4d); border: 1px solid #333; margin-left: 5px; white-space: nowrap; }
.cbtn.first { margin-left: 9px; }
.iso { margin: 0 4px 0 4px; }

/* workspace */
.work { flex: 1; display: flex; min-height: 0; }
.tools { width: 28px; padding-right: 1px; background: #484848; border-left: 1px solid #303030; border-right: 1px solid #2d2d2d; display: flex; flex-direction: column; align-items: center; }
.strip { align-self: stretch; height: 7px; background: #303030; color: #aaa; font-size: 5px; line-height: 7px; padding: 0 2px; flex: none; }
.grip { width: 14px; height: 2px; background: #2c2c2c; margin: 3px 0 7px; }
.tgroup { border-bottom: 1px solid #3e3e3e; }
.tgroup button { display: flex; align-items: center; justify-content: center; width: 20px; height: 16px; }
.tgroup .on { background: #303030; }
.tgroup svg { width: 13px; height: 13px; }
.tgroup .m { background: linear-gradient(#ccc, #ccc) no-repeat 17px 12px / 2px 2px; }
.mini { display: flex; gap: 6px; margin: 3px 0 2px; }
.fillstroke { width: 20px; height: 20px; }
.modes { display: flex; margin: 3px 0 6px; border: 1px solid #222; }
.modes > * { width: 6px; height: 6px; }
.c1 { background: #555; }
.c2 { background: linear-gradient(90deg, #fff, #333); }
.draw { width: 10px; height: 10px; }
.screen { width: 13px; height: 12px; margin-top: 5px; }
.center { flex: 1; min-width: 0; display: flex; flex-direction: column; }
.tabs { height: 14px; background: #303030; border-bottom: 1px solid #777; flex: none; display: flex; }
.tab { background: #484848; display: flex; align-items: center; gap: 7px; padding: 0 4px 0 6px; color: #ddd; font-family: Lato, sans-serif; }
.tab button { font-size: 9px; line-height: 10px; }
.canvas-row { flex: 1; display: flex; min-height: 0; }
.canvas { flex: 1; background: #5c5c5c; position: relative; overflow: hidden; }
.vscroll { width: 12px; background: #383838; display: flex; justify-content: center; padding-top: 4px; color: #ddd; border-right: 1px solid #2d2d2d; }

/* artwork on the free canvas */
.card { position: absolute; top: 171px; width: 514px; height: 290px; border: 1px solid #9a3336; font-family: Lato, sans-serif; font-size: 12px; line-height: 15px; color: #555; }
.card.green { left: 34px; }
.card.orange { left: 668px; }
.card > * { position: absolute; }
.band { left: 0; right: 0; background: #006747; }
.orange .band { background: #f29f15; }
.orange { border-color: #c5561f; }
.band.top { top: 0; height: 81px; }
.band.bottom { bottom: 0; height: 42px; }
.paper { top: 81px; bottom: 42px; left: 15px; right: 15px; background: #fdfdfd; }
.trim { top: 16px; bottom: 15px; left: 15px; right: 15px; border: 1px solid #14392c; }
.orange .trim { border-color: #d29230; }
.headline { top: 26px; left: 47px; font-family: Roboto, sans-serif; font-weight: 900; font-size: 36px; line-height: 48px; color: #fff; white-space: nowrap; }
.orange .headline { left: auto; right: 236px; font-size: 27px; top: 31px; }
.name { top: 146px; left: 75px; color: #222; font-size: 13px; }
.title { top: 165px; left: 105px; }
.orange .name { left: auto; right: 367px; }
.orange .title { left: auto; right: 366px; }
.rule { left: 160px; top: 103px; width: 2px; height: 128px; background: linear-gradient(#fff, #ecd98e 30%, #ecd98e 70%, #fff); }
.contact { left: 177px; top: 113px; white-space: nowrap; }
.addr { margin-bottom: 20px; }
.two { display: flex; }
.two span:first-child { width: 117px; }
.cep { margin-bottom: 5px; }
.mail { height: 13px; }
.web { font-size: 11px; }

/* status bar */
.status { height: 12px; flex: none; display: flex; align-items: center; background: #484848; font-size: 7px; padding-left: 5px; border-top: 1px solid #3a3a3a; }
.st1 { width: 12px; height: 7px; margin-right: 8px; }
.zoomc { margin-left: 8px; height: 11px; }
.combo.zoomc input { width: 27px; padding-left: 2px; }
.pg { display: flex; align-items: center; margin-left: 6px; line-height: 8px; }
.pg + .pg { margin-left: 6px; }
.pagec { margin-left: 4px; height: 11px; }
.combo.pagec input { width: 27px; padding-left: 2px; }
.toolname { margin: 0 55px 0 56px; }
.hscroll { flex: 1; height: 11px; background: #343434; margin-left: 6px; padding-left: 3px; display: flex; align-items: center; position: relative; }
.hscroll i { position: absolute; left: 49%; top: 1px; width: 10px; height: 9px; background: #777; }

/* dock */
.dock { width: 26px; background: #484848; border-left: 1px solid #2d2d2d; }
.dock .strip { text-align: right; }
.dgroup { display: flex; flex-direction: column; align-items: center; border-bottom: 1px solid #333; padding-top: 7px; background: linear-gradient(#2c2c2c, #2c2c2c) no-repeat 50% 3px / 14px 2px; }
.dgroup button { width: 20px; height: 19px; display: flex; align-items: center; justify-content: center; }
.dgroup .on { background: #303030; }
.dgroup svg { width: 13px; height: 13px; }

/* variables panel */
.varpanel { position: absolute; right: 27px; top: 290px; width: 160px; height: 404px; display: flex; flex-direction: column; background: #484848; border: 1px solid #2a2a2a; border-top-width: 2px; font-size: 7px; }
.varpanel header { height: 12px; background: #303030; display: flex; align-items: center; gap: 7px; flex: none; padding-right: 2px; }
.varpanel h2 { background: #484848; padding: 0 4px; font-weight: 600; line-height: 12px; }
.ff { width: 7px; height: 5px; }
.dataset { display: flex; align-items: center; padding: 2px 8px 0 6px; height: 20px; color: #888; flex: none; }
.cam { width: 10px; height: 8px; margin-right: 3px; }
.dataset label { margin-right: 3px; white-space: nowrap; }
.dsc { flex: 1; margin-right: 9px; }
.combo.dsc input { flex: 1; width: 0; background: #6e6e6e; }
.dataset .i4x6 { margin-right: 12px; color: #666; }
.dataset .i4x6:last-child { margin-right: 0; }
.vtable { flex: 1; margin: 0 4px 0 3px; border: 1px solid #333; }
.vhead { display: grid; grid-template-columns: 16px 66px 1fr; background: linear-gradient(#575757, #4a4a4a); border-bottom: 1px solid #333; line-height: 12px; height: 13px; text-align: center; }
.vhead span + span { border-left: 1px solid #333; }
.vfoot { height: 15px; display: flex; align-items: center; gap: 8px; padding: 0 17px 0 7px; flex: none; }
.vgrip { width: 13px; height: 2px; background: #222; align-self: center; margin-bottom: 2px; flex: none; }

/* file dialog */
.dialog { position: absolute; left: 188px; top: 160px; width: 640px; height: 359px; display: flex; flex-direction: column; padding: 0 5px 4px; border: 1px solid #1e262c; border-radius: 5px; background: linear-gradient(90deg, #46706f, #3f6f6c 20%, #4c7276 60%, #7d7c63 85%, #8a8468) bottom / 100% 5px no-repeat, linear-gradient(100deg, #8796a4 0, #7e8e9d 24%, #4d5c69 32%, #506070 50%, #61707e 62%, #4e5d6b 80%, #8a949c 100%); box-shadow: inset 0 0 0 1px #a6b8c2, 0 1px 6px 2px rgba(0, 0, 0, .6); color: #1a1a1a; font-family: Lato, "Open Sans", sans-serif; }
.dtitle { height: 18px; display: flex; align-items: center; flex: none; }
.aibox { width: 9px; height: 9px; background: #3b1400; border: 1px solid #66300f; color: #ee8c33; font-size: 6px; line-height: 7px; font-weight: 700; text-align: center; flex: none; }
.dtitle h1 { flex: 1; margin-left: 4px; color: #000; text-shadow: 0 0 4px #dde6ee, 0 0 4px #dde6ee; }
.dtitle button { align-self: flex-start; width: 32px; height: 13px; border-radius: 0 0 3px 3px; border: 1px solid #4c1d1a; border-top: 0; background: linear-gradient(#d9938a, #c0392b 50%, #a82a1c 51%, #cf5c46); display: flex; align-items: center; justify-content: center; }
.dtitle button svg { width: 9px; height: 8px; }
.dnav { height: 24px; display: flex; align-items: center; flex: none; padding: 0 1px 1px; }
.round { width: 17px; height: 17px; border-radius: 50%; margin-right: 2px; border: 1px solid #5e6b77; background: linear-gradient(#b9c1c8, #89949e 50%, #76828d 51%, #a4afb8); box-shadow: inset 0 0 1px 1px #c9d1d7; flex: none; }
.hist { color: #56626e; margin: 0 3px 0 1px; }
.crumbs, .dsearch, .refresh { height: 14px; border: 1px solid #48545f; background: #c3cad2; display: flex; align-items: center; }
.crumbs { flex: 1; gap: 5px; padding: 0 4px 0 2px; background: linear-gradient(90deg, #d5dbe0, #b8c0ca 40%, #ccd2da); }
.refresh { width: 17px; justify-content: center; border-left: 0; }
.dsearch { width: 134px; margin-left: 4px; padding: 0 3px 0 5px; color: #2f6da8; }
.dsearch input { flex: 1; font-style: italic; }
.dsearch input::placeholder { color: #6b737b; opacity: 1; }
.dclient { flex: 1; min-height: 0; display: flex; flex-direction: column; background: #fcfcfd; border: 1px solid #dfe8ee; }
.dtool { height: 19px; flex: none; display: flex; align-items: center; background: linear-gradient(#fafcfe, #e9f1fa 50%, #dbe6f4 51%, #dde8f5); border-bottom: 1px solid #b9c9dc; color: #1e395b; padding: 0 9px 0 10px; }
.dtool button { display: flex; align-items: center; gap: 4px; margin-right: 20px; }
.vw { width: 11px; height: 9px; }
.vd { margin: 0 15px 0 6px; }
.pn { width: 11px; height: 9px; margin-right: 13px; }
.q { width: 11px; height: 11px; border-radius: 50%; background: #2a4a9c; border: 1px solid #8ea4cf; color: #fff; font-weight: 700; line-height: 9px; text-align: center; }
.dbody { flex: 1; min-height: 0; display: flex; }
.tree { width: 93px; overflow: hidden; padding-top: 7px; }
.tree a { display: flex; align-items: center; height: 14px; padding-left: 19px; gap: 3px; white-space: nowrap; }
.tree .root { padding-left: 12px; }
.tree .last { margin-bottom: 14px; }
.tree svg { width: 10px; height: 10px; }
.tree .sel { background: linear-gradient(#f6f6f6, #e4e4e4); }
.tscroll { width: 11px; display: flex; flex-direction: column; align-items: center; padding: 4px 0; gap: 3px; background: #f2f2f2; color: #444; }
.tscroll i { width: 9px; height: 184px; margin-bottom: auto; border: 1px solid #a5a5a5; background: linear-gradient(90deg, #f4f4f4, #cfcfcf); font-style: normal; line-height: 182px; text-align: center; }
.files { flex: 1; padding: 0 11px 0 12px; background: linear-gradient(#f6f9fd, #fcfcfd 40px); }
.lhead { display: flex; justify-content: space-between; align-items: center; height: 38px; border-bottom: 1px solid #e3e8ed; color: #54657a; padding-right: 13px; }
.lhead h2 { color: #1c7a2c; font-family: "Open Sans", sans-serif; font-size: 12px; line-height: 15px; }
.lhead a { color: #1a5a9e; margin-left: 2px; }
.sort, .sort a { display: flex; align-items: center; gap: 4px; }
table { width: 100%; border-collapse: collapse; table-layout: fixed; }
.c-name { width: 169px; }
.c-date, .c-type { width: 80px; }
.c-size { width: 54px; }
th, td { padding: 0 0 0 5px; height: 14px; line-height: 12px; font-weight: normal; text-align: left; white-space: nowrap; color: #6d6d6d; }
th { height: 20px; padding-bottom: 4px; color: #4c607a; border-right: 1px solid #eef1f4; position: relative; }
th:first-child, td:first-child { padding-left: 0; }
td:first-child { color: #1a1a1a; }
td:first-child svg { display: inline-block; vertical-align: middle; width: 11px; height: 11px; margin-right: 3px; }
.srt { position: absolute; left: 80px; top: 0; width: 6px; height: 4px; }
.dfoot { height: 51px; flex: none; background: #f0f0f0; display: grid; grid-template-columns: 123px 1fr 124px; column-gap: 4px; row-gap: 5px; padding: 9px 10px 0 0; align-content: start; }
.dfoot label { text-align: right; line-height: 14px; }
.fname { height: 14px; background: #fff; display: flex; align-items: center; margin-right: 5px; padding-right: 2px; }
.fname input { flex: 1; height: 14px; }
.ftype { height: 14px; position: relative; }
.ftype select { appearance: none; width: 100%; height: 14px; padding-left: 1px; border: 1px solid #8c8c8c; background: linear-gradient(#f3f3f3, #dadada); display: block; }
.ftype svg { position: absolute; right: 4px; top: 6px; }
.dbtns { grid-column: 3; display: flex; gap: 10px; }
.dbtns button { flex: 1; height: 15px; line-height: 12px; border: 1px solid #3f9fc6; border-radius: 2px; background: linear-gradient(#f0f4f6, #d6dde1); box-shadow: inset 0 0 0 1px #a8e0f4; }
.dbtns .cancel { border-color: #2c628b; background: linear-gradient(#e2f2fb, #b9dff5 50%, #8fc8e8 51%, #7db8da); box-shadow: none; }

/* taskbar */
.taskbar { height: 20px; flex: none; display: flex; align-items: center; background: linear-gradient(#2b7585, #195c6d 15%, #1a6072); color: #fff; position: relative; font-family: Lato, sans-serif; }
.orb { width: 25px; height: 25px; margin: -3px 16px -2px 5px; }
.launch { width: 12px; height: 12px; margin: 0 9px 0 2px; }
.launch + .launch { margin-left: 10px; }
.task { width: 105px; height: 18px; margin-left: 2px; padding: 0 6px; display: flex; align-items: center; gap: 3px; border: 1px solid #6f9fa9; border-radius: 2px; background: linear-gradient(#4d8791, #2c6a75); white-space: nowrap; }
.task.active { background: linear-gradient(#a9c3c7, #7fa3aa); border-color: #c5d9dc; margin-left: 1px; }
.lang { margin-right: 12px; }
.tup { margin-right: 11px; }
.tup + .i10 { margin-left: 2px; }
.taskbar .i10 + .i10 { margin-left: 6px; }
time { margin: 0 16px 0 20px; }
.showdesk { width: 9px; align-self: stretch; border: 1px solid #6ca0ab; background: #2d7483; }
.cursor { position: absolute; left: 788px; top: 502px; width: 9px; height: 13px; }
```
